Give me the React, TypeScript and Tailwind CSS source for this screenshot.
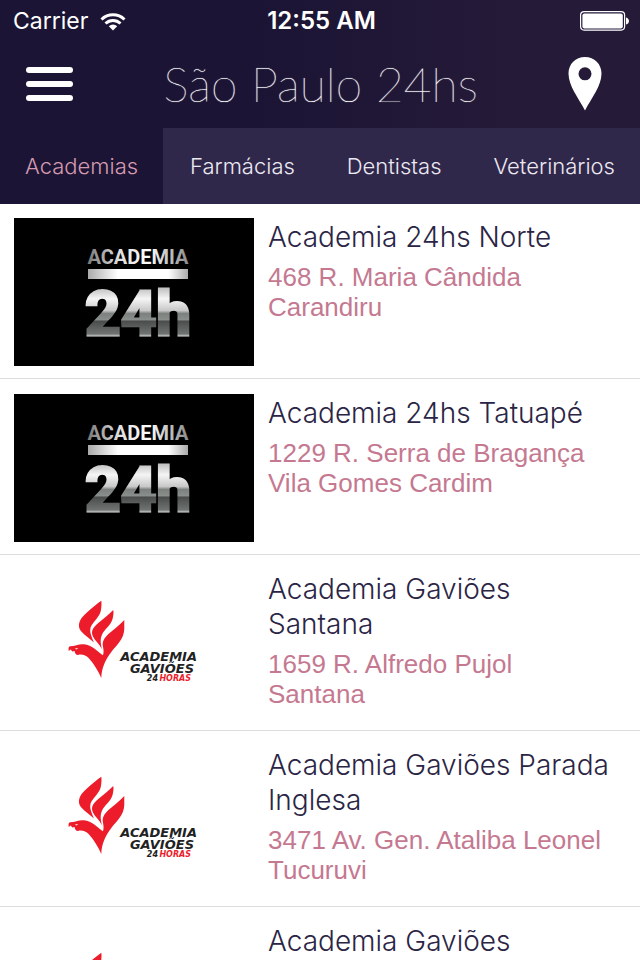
interface Place {
  id: number;
  name: string;
  street: string;
  district: string;
  logo: '24h' | 'gavioes';
}

const tabs = ['Academias', 'Farmácias', 'Dentistas', 'Veterinários'];

const places: Place[] = [
  { id: 1, name: 'Academia 24hs Norte', street: '468 R. Maria Cândida', district: 'Carandiru', logo: '24h' },
  { id: 2, name: 'Academia 24hs Tatuapé', street: '1229 R. Serra de Bragança', district: 'Vila Gomes Cardim', logo: '24h' },
  { id: 3, name: 'Academia Gaviões Santana', street: '1659 R. Alfredo Pujol', district: 'Santana', logo: 'gavioes' },
  { id: 4, name: 'Academia Gaviões Parada Inglesa', street: '3471 Av. Gen. Ataliba Leonel', district: 'Tucuruvi', logo: 'gavioes' },
  { id: 5, name: 'Academia Gaviões', street: '', district: '', logo: 'gavioes' },
];

function Logo24h() {
  return (
    <svg viewBox="0 0 240 148" className="w-60 h-[148px] shrink-0 bg-black" role="img" aria-label="Academia 24h">
      <defs>
        <linearGradient id="steelTop" x1="0" x2="1" y1="0" y2="0">
          <stop offset="0" stopColor="#777" />
          <stop offset=".3" stopColor="#ddd" />
          <stop offset=".6" stopColor="#fff" />
          <stop offset="1" stopColor="#888" />
        </linearGradient>
        <linearGradient id="steelBar" x1="0" x2="1" y1="0" y2="0">
          <stop offset="0" stopColor="#aaa" />
          <stop offset=".3" stopColor="#fff" />
          <stop offset=".8" stopColor="#fff" />
          <stop offset="1" stopColor="#aaa" />
        </linearGradient>
        <linearGradient id="steelBig" gradientUnits="userSpaceOnUse" x1="0" x2="0" y1="68" y2="119">
          <stop offset="0" stopColor="#b5b5b5" />
          <stop offset=".25" stopColor="#f5f5f5" />
          <stop offset=".48" stopColor="#c8c8c8" />
          <stop offset=".54" stopColor="#7d817e" />
          <stop offset=".66" stopColor="#8b8f8c" />
          <stop offset=".69" stopColor="#4a4d4b" />
          <stop offset=".94" stopColor="#6f7371" />
          <stop offset="1" stopColor="#eee" />
        </linearGradient>
      </defs>
      <g className="font-['Roboto',sans-serif] font-bold" textAnchor="middle">
        <text x="124" y="46" fontSize="20" fill="url(#steelTop)">ACADEMIA</text>
        <text x="124" y="117" fontSize="62" fill="url(#steelBig)" stroke="url(#steelBig)" strokeWidth="3">24h</text>
      </g>
      <rect x="74" y="51" width="100" height="10" fill="url(#steelBar)" />
    </svg>
  );
}

function LogoGavioes() {
  return (
    <svg viewBox="0 0 240 148" className="w-60 h-[148px] shrink-0" role="img" aria-label="Academia Gaviões 24 horas">
      <g transform="translate(50 26) scale(.333)" fill="#ec1c2b">
        <path d="M112 14C98 24 84 36 68 50C52 64 44 76 45 92C48 110 72 122 90 140C82 120 76 108 80 94C88 76 108 62 111 42C113 30 113 20 112 14Z" />
        <path d="M148 42C134 56 116 70 102 82C88 94 82 104 85 116C90 132 106 142 114 160C110 142 108 130 114 116C122 98 141 88 146 68C149 56 149 48 148 42Z" />
        <path d="M181 72C168 86 150 100 136 112C120 126 114 138 117 152C119 162 120 170 117 178C100 166 84 148 60 145C46 143 34 150 18 151C12 153 14 158 14 165L20 161L25 167L32 165C32 172 36 177 42 177C54 174 66 178 74 186C90 204 102 224 112 246C113 216 124 192 142 168C156 150 180 130 181 100Z" />
        <path d="M34 156l9 2l-7 3z" fill="#fff" />
      </g>
      <g className="font-['DejaVu_Sans',sans-serif] font-bold italic" fill="#222" textAnchor="end">
        <text x="183" y="91" fontSize="13">ACADEMIA</text>
        <text x="180" y="103" fontSize="13">GAVIÕES</text>
        <text x="144" y="111" fontSize="8">24</text>
        <text x="177" y="111" fontSize="8" fill="#ec1c2b">HORAS</text>
      </g>
    </svg>
  );
}

function StatusBar() {
  return (
    <div className="grid grid-cols-3 items-center h-10 pt-[2px] pl-[13px] pr-[10px] font-['Inter',sans-serif]">
      <div className="flex items-center gap-3 text-[23px]">
        Carrier
        <svg viewBox="0 0 26 19" className="w-[26px] h-[19px]" fill="none" stroke="#fff" strokeWidth="3" aria-hidden="true">
          <path d="M1.5 7.5a16.500 16.500 0 0 1 23 0" />
          <path d="M5.500 11.500a11 11 0 0 1 15 0" />
          <path d="M13 18.500l-4.200-4.300a6 6 0 0 1 8.400 0z" fill="#fff" stroke="none" />
        </svg>
      </div>
      <div className="text-center text-2xl font-semibold">12:55 AM</div>
      <svg viewBox="0 0 50 20" className="w-[50px] h-5 justify-self-end" fill="#fff" aria-hidden="true">
        <rect x=".6" y=".6" width="44" height="18.500" rx="3.500" fill="none" stroke="#fff" strokeWidth="1.200" />
        <rect x="2.400" y="2.400" width="40.400" height="15" rx="2" />
        <path d="M46 6.500c4 1 4 6 0 7z" />
      </svg>
    </div>
  );
}

function PlaceRow({ place }: { place: Place }) {
  return (
    <li className="flex gap-[14px] px-[14px] pt-[15px] pb-3 border-t border-[#dcdcdc] first:border-t-0 first:pt-[14px]">
      {place.logo === '24h' ? <Logo24h /> : <LogoGavioes />}
      <div className="pt-[2px] pr-1">
        <h2 className="font-['Inter',sans-serif] font-light text-[28px] leading-[35px] text-[#2b2545]">{place.name}</h2>
        <p className="mt-[7px] font-['Liberation_Sans',Arial,sans-serif] text-[26px] leading-[30px] text-[#c57991]">
          {place.street}
          <br />
          {place.district}
        </p>
      </div>
    </li>
  );
}

export default function App() {
  return (
    <div className="flex flex-col h-screen overflow-hidden bg-white">
      <header className="shrink-0 text-white bg-linear-to-r from-[#1b1434] from-40% to-[#251a38] to-80%">
        <StatusBar />
        <div className="flex items-center justify-between h-[88px] pl-[26px] pr-[38px]">
          <button aria-label="Menu" className="flex flex-col gap-2 w-[47px]">
            <span className="h-[6px] w-full rounded-full bg-white" />
            <span className="h-[6px] w-full rounded-full bg-white" />
            <span className="h-[6px] w-full rounded-full bg-white" />
          </button>
          <h1 className="font-['Lato',sans-serif] font-thin text-5xl [text-shadow:0_0_1px_#fff]">São Paulo 24hs</h1>
          <button aria-label="Mapa">
            <svg viewBox="0 0 34 54" className="w-[34px] h-[54px]" fill="#fff" fillRule="evenodd">
              <path d="M17 0C7.500 0 .5 7 .5 16.500C.5 29 10.500 41 17 53.500C23.500 41 33.500 29 33.500 16.500C33.500 7 26.500 0 17 0ZM17 10.300a6.500 6.500 0 1 1 0 13a6.500 6.500 0 1 1 0-13Z" />
            </svg>
          </button>
        </div>
        <nav className="flex justify-between h-[76px] bg-[#30284a] font-['Inter',sans-serif] font-light text-[22px]">
          {tabs.map((tab, i) => (
            <button
              key={tab}
              className={i === 0 ? 'px-[25px] bg-[#1b1434] text-[#d59ab0]' : 'px-[25px] text-[#ece9f3]'}
            >
              {tab}
            </button>
          ))}
        </nav>
      </header>
      <ul className="flex-1 overflow-y-auto [scrollbar-width:none]">
        {places.map(place => (
          <PlaceRow key={place.id} place={place} />
        ))}
      </ul>
    </div>
  );
}
